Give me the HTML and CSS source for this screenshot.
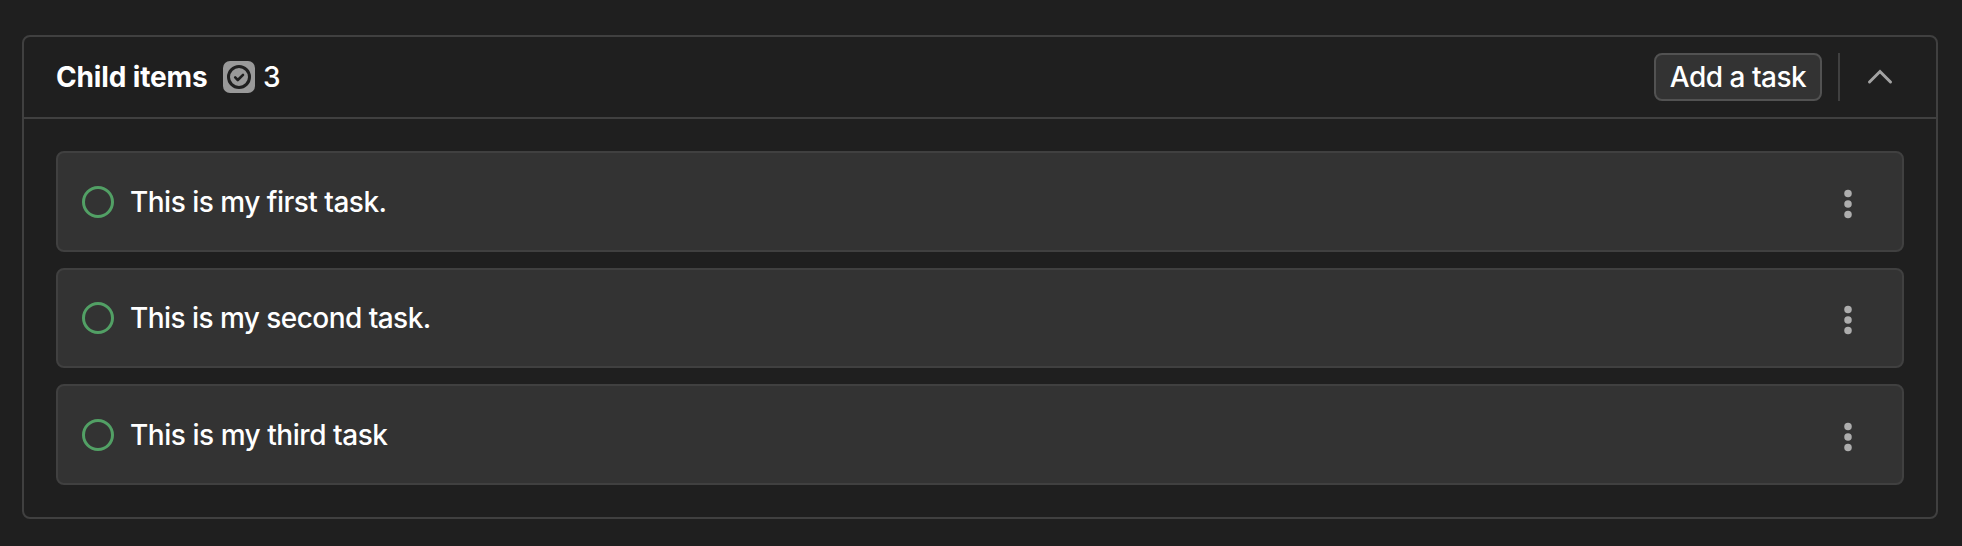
FILE: index.html
```html
<!DOCTYPE html>
<html lang="en">
<head>
<meta charset="utf-8">
<title>Child items</title>
<link rel="stylesheet" href="styles.css">
</head>
<body>
<section class="panel">
  <header class="panel-header">
    <h2 class="title">Child items</h2>
    <svg class="badge" viewBox="0 0 32 32"><rect width="32" height="32" rx="7" fill="#999"/><circle cx="16" cy="16" r="10.5" fill="none" stroke="#1f1f1f" stroke-width="3"/><path d="M12.2 16.4l2.6 2.6 5.200-5.200" fill="none" stroke="#1f1f1f" stroke-width="2.600" stroke-linecap="round" stroke-linejoin="round"/></svg>
    <span class="count">3</span>
    <button class="add" type="button"><span>Add a task</span></button>
    <span class="divider"></span>
    <button class="toggle" type="button" aria-label="Collapse"><svg viewBox="0 0 32 32"><path d="M5.500 21L16 10.500 26.500 21" fill="none" stroke="#a3a3a3" stroke-width="3" stroke-linecap="round" stroke-linejoin="miter"/></svg></button>
  </header>
  <ul class="tasks">
    <li class="task">
      <svg class="status" viewBox="0 0 32 32"><circle cx="16" cy="16" r="14.500"/></svg>
      <span class="name first">This is my first task.</span>
      <svg class="more" viewBox="0 0 32 32"><circle cx="16" cy="5.500" r="3.750"/><circle cx="16" cy="16" r="3.750"/><circle cx="16" cy="26.500" r="3.750"/></svg>
    </li>
    <li class="task">
      <svg class="status" viewBox="0 0 32 32"><circle cx="16" cy="16" r="14.500"/></svg>
      <span class="name second">This is my second task.</span>
      <svg class="more" viewBox="0 0 32 32"><circle cx="16" cy="5.500" r="3.750"/><circle cx="16" cy="16" r="3.750"/><circle cx="16" cy="26.500" r="3.750"/></svg>
    </li>
    <li class="task">
      <svg class="status" viewBox="0 0 32 32"><circle cx="16" cy="16" r="14.500"/></svg>
      <span class="name third">This is my third task</span>
      <svg class="more" viewBox="0 0 32 32"><circle cx="16" cy="5.500" r="3.750"/><circle cx="16" cy="16" r="3.750"/><circle cx="16" cy="26.500" r="3.750"/></svg>
    </li>
  </ul>
</section>
</body>
</html>
```
FILE: styles.css
```css
* { box-sizing: border-box; }
body {
  margin: 0;
  padding: 35px 24px 27px 22px;
  height: 546px;
  background: #1f1f1f;
  color: #fff;
  font: 450 28px/32px Inter, "Liberation Sans", sans-serif;
}
svg { display: block; flex: none; }
.panel {
  height: 484px;
  border: 2px solid #404040;
  border-radius: 8px;
}
.panel-header {
  display: flex;
  align-items: center;
  height: 82px;
  padding: 0 40px 0 32px;
  border-bottom: 2px solid #404040;
}
.title {
  width: 151px;
  margin: 0 16px 0 0;
  font-size: 28px;
  font-weight: 650;
  letter-spacing: -0.15px;
  white-space: nowrap;
}
.badge { width: 32px; height: 32px; }
.count { margin-left: 8px; }
.add {
  width: 168px;
  height: 48px;
  margin-left: auto;
  padding: 0;
  border: 2px solid #525252;
  border-radius: 8px;
  background: #333;
  color: #fff;
  font: inherit;
  letter-spacing: -0.5px;
  white-space: nowrap;
}
.divider {
  width: 2px;
  height: 48px;
  margin: 0 24px 0 16px;
  background: #404040;
}
.toggle {
  padding: 0;
  border: 0;
  background: none;
}
.toggle svg { width: 32px; height: 32px; }
.tasks {
  display: flex;
  flex-direction: column;
  gap: 16px;
  height: 398px;
  margin: 0;
  padding: 32px;
  list-style: none;
}
.task {
  display: flex;
  flex: 1;
  align-items: center;
  padding: 0.8px 38px 0 24px;
  border: 2px solid #404040;
  border-radius: 8px;
  background: #333;
}
.status {
  width: 32px;
  height: 32px;
  fill: none;
  stroke: #52a065;
  stroke-width: 3;
}
.name {
  margin-left: 16px;
  white-space: nowrap;
}
.first { letter-spacing: -0.51px; }
.second { letter-spacing: -0.55px; }
.third { letter-spacing: -0.46px; }
.more {
  width: 32px;
  height: 32px;
  margin: 4px 0 0 auto;
  fill: #adadad;
}
```
